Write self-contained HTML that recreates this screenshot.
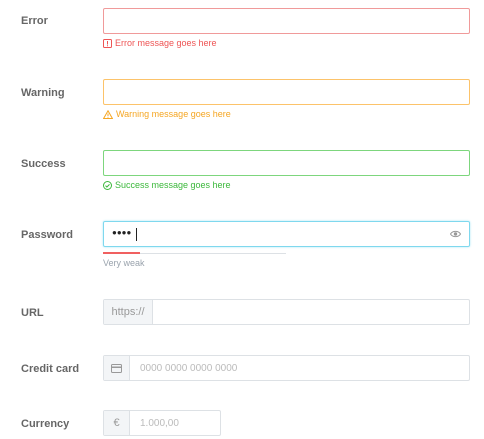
<!DOCTYPE html>
<html><head><style>
body{margin:0;background:#fff;font-family:"Liberation Sans",sans-serif;width:484px;height:439px;position:relative;overflow:hidden}
.l{position:absolute;left:21px;font-size:11px;font-weight:bold;color:#666}
.i{position:absolute;left:103px;width:365px;height:24px;border:1px solid #dde1e5;border-radius:2px;box-sizing:content-box}
.m{position:absolute;left:103px;font-size:9px;display:flex;align-items:center;gap:3px}
.p{position:absolute;top:0;left:0;bottom:0;background:#f3f5f7;border-right:1px solid #dde1e5;color:#999;font-size:11px;display:flex;align-items:center;justify-content:center}
.ph{position:absolute;top:0;bottom:0;display:flex;align-items:center;font-size:10px;color:#bbb}
</style></head><body>
<div class="l" style="top:15px">Error</div>
<div class="i" style="top:8px;border-color:#f09a9a"></div>
<div class="m" style="top:38px;color:#e55"><svg width="9" height="9"><rect x=".5" y=".5" width="8" height="8" rx="1" fill="none" stroke="#e55"/><path d="M4.5 2v3.5M4.5 6.3v1" stroke="#e55"/></svg>Error message goes here</div>

<div class="l" style="top:87px">Warning</div>
<div class="i" style="top:79px;border-color:#fcc36a"></div>
<div class="m" style="top:109px;color:#f5a623"><svg width="10" height="9"><path d="M5 .8L9.4 8.5H.6Z" fill="none" stroke="#f5a623"/><path d="M5 3.5v2.5M5 6.8v.8" stroke="#f5a623"/></svg>Warning message goes here</div>

<div class="l" style="top:158px">Success</div>
<div class="i" style="top:150px;border-color:#7dd67d"></div>
<div class="m" style="top:180px;color:#3cb83c"><svg width="9" height="9"><circle cx="4.5" cy="4.5" r="4" fill="none" stroke="#3cb83c"/><path d="M2.5 4.6l1.4 1.4 2.6-2.6" fill="none" stroke="#3cb83c"/></svg>Success message goes here</div>

<div class="l" style="top:229px">Password</div>
<div class="i" style="top:221px;border-color:#7fd8ee;box-shadow:0 0 2px #a8e6f5">
<div style="position:absolute;left:8px;top:6px;font-size:8px;letter-spacing:0;color:#222">●●●●</div>
<div style="position:absolute;left:32px;top:6px;width:1px;height:13px;background:#222"></div>
<svg style="position:absolute;right:8px;top:8px" width="11" height="8"><path d="M.5 4C2.5.5 8.5.5 10.5 4C8.5 7.5 2.5 7.5.5 4Z" fill="none" stroke="#999"/><circle cx="5.5" cy="4" r="1.7" fill="#999"/></svg>
</div>
<div style="position:absolute;left:103px;top:253px;width:183px;height:1px;background:#dde1e5"></div>
<div style="position:absolute;left:103px;top:252px;width:37px;height:2px;background:#f06060"></div>
<div style="position:absolute;left:103px;top:258px;font-size:9px;color:#9aa3ad">Very weak</div>

<div class="l" style="top:307px">URL</div>
<div class="i" style="top:299px"><div class="p" style="width:48px">https://</div></div>

<div class="l" style="top:363px">Credit card</div>
<div class="i" style="top:355px"><div class="p" style="width:25px"><svg width="11" height="9"><rect x=".5" y=".5" width="10" height="8" rx="1" fill="none" stroke="#999"/><rect x="1" y="2.5" width="9" height="1.5" fill="#999"/></svg></div><div class="ph" style="left:36px">0000 0000 0000 0000</div></div>

<div class="l" style="top:418px">Currency</div>
<div class="i" style="top:410px;width:116px"><div class="p" style="width:25px;font-size:11px">€</div><div class="ph" style="left:36px">1.000,00</div></div>
</body></html>
